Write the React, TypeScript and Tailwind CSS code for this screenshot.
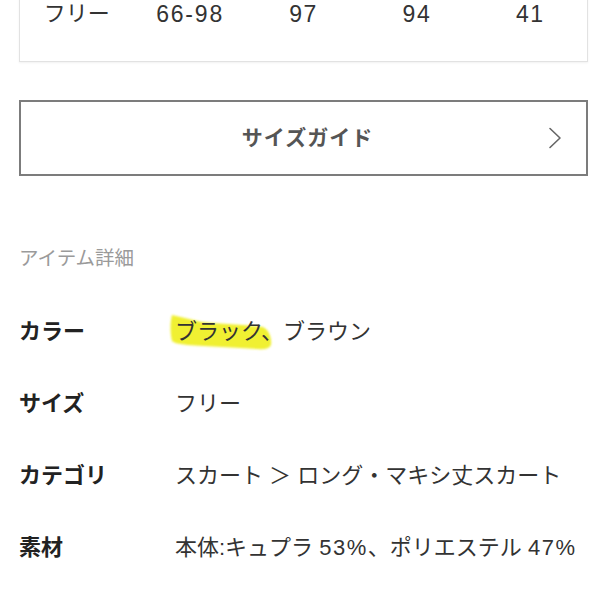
import React from "react";

const font = { fontFamily: '"Liberation Sans", "Noto Sans CJK JP", sans-serif' };

function Row({ label, children }: { label: string; children: React.ReactNode }) {
  return (
    <div className="flex h-[72px] items-center">
      <div className="w-[156px] shrink-0 text-[22px] font-bold text-[#222]">{label}</div>
      <div className="relative text-[22px] text-[#333]">{children}</div>
    </div>
  );
}

export default function App() {
  return (
    <div className="h-[608px] w-[608px] overflow-hidden bg-white" style={font}>
      <div className="pl-[19px] pr-[20px]">
        <div className="-mt-[40px] border border-[#e2e2e2] shadow-[0_1px_2px_rgba(0,0,0,0.06)] pt-[40px] pb-[34px]">
          <div className="grid grid-cols-5 text-[22px] leading-[26px] text-[#333]">
            <div className="text-center">フリー</div>
            <div className="text-center text-[23px] tracking-[1.8px]">66-98</div>
            <div className="text-center text-[23px] tracking-[1.5px]">97</div>
            <div className="text-center text-[23px] tracking-[1.5px]">94</div>
            <div className="text-center text-[23px] tracking-[1.5px]">41</div>
          </div>
        </div>

        <div className="mt-[38px] flex h-[76px] items-center justify-center relative border-2 border-[#7c7c7c]">
          <span className="ml-[8px] text-[21px] font-bold text-[#555] tracking-[1px]">サイズガイド</span>
          <svg className="absolute right-[24px] top-1/2 -translate-y-1/2" width="14" height="22" viewBox="0 0 14 22">
            <path d="M2 1.5 L12 11 L2 20.5" fill="none" stroke="#666" strokeWidth="1.6" strokeLinecap="round" strokeLinejoin="round" />
          </svg>
        </div>

        <div className="mt-[66px] flex h-[34px] items-center text-[19.5px] text-[#9a9a9a]">アイテム詳細</div>

        <div className="mt-[19px]">
          <Row label="カラー">
            <svg className="absolute -left-[8px] -top-[3px]" width="112" height="42" viewBox="0 0 112 42">
              <defs>
                <filter id="soft" x="-10%" y="-30%" width="120%" height="160%">
                  <feGaussianBlur stdDeviation="0.8" />
                </filter>
              </defs>
              <path
                d="M5 3 C 15 5, 25 8, 35 10 C 55 12, 80 13, 96 15 C 102 18, 105 26, 104 33 C 102 37, 97 38, 90 37 C 70 36, 40 34, 20 33 C 12 32, 7 31, 5 29 C 3 21, 3 10, 5 3 Z"
                fill="#f0f032"
                filter="url(#soft)"
              />
            </svg>
            <span className="relative">ブラック、ブラウン</span>
          </Row>
          <Row label="サイズ">フリー</Row>
          <Row label="カテゴリ">スカート ＞ ロング・マキシ丈スカート</Row>
          <Row label="素材">
            本体:キュプラ <span className="tracking-[1.5px]">53%</span>、ポリエステル <span className="tracking-[1.5px]">47%</span>
          </Row>
          <Row label="原産国">中国</Row>
        </div>
      </div>
    </div>
  );
}
